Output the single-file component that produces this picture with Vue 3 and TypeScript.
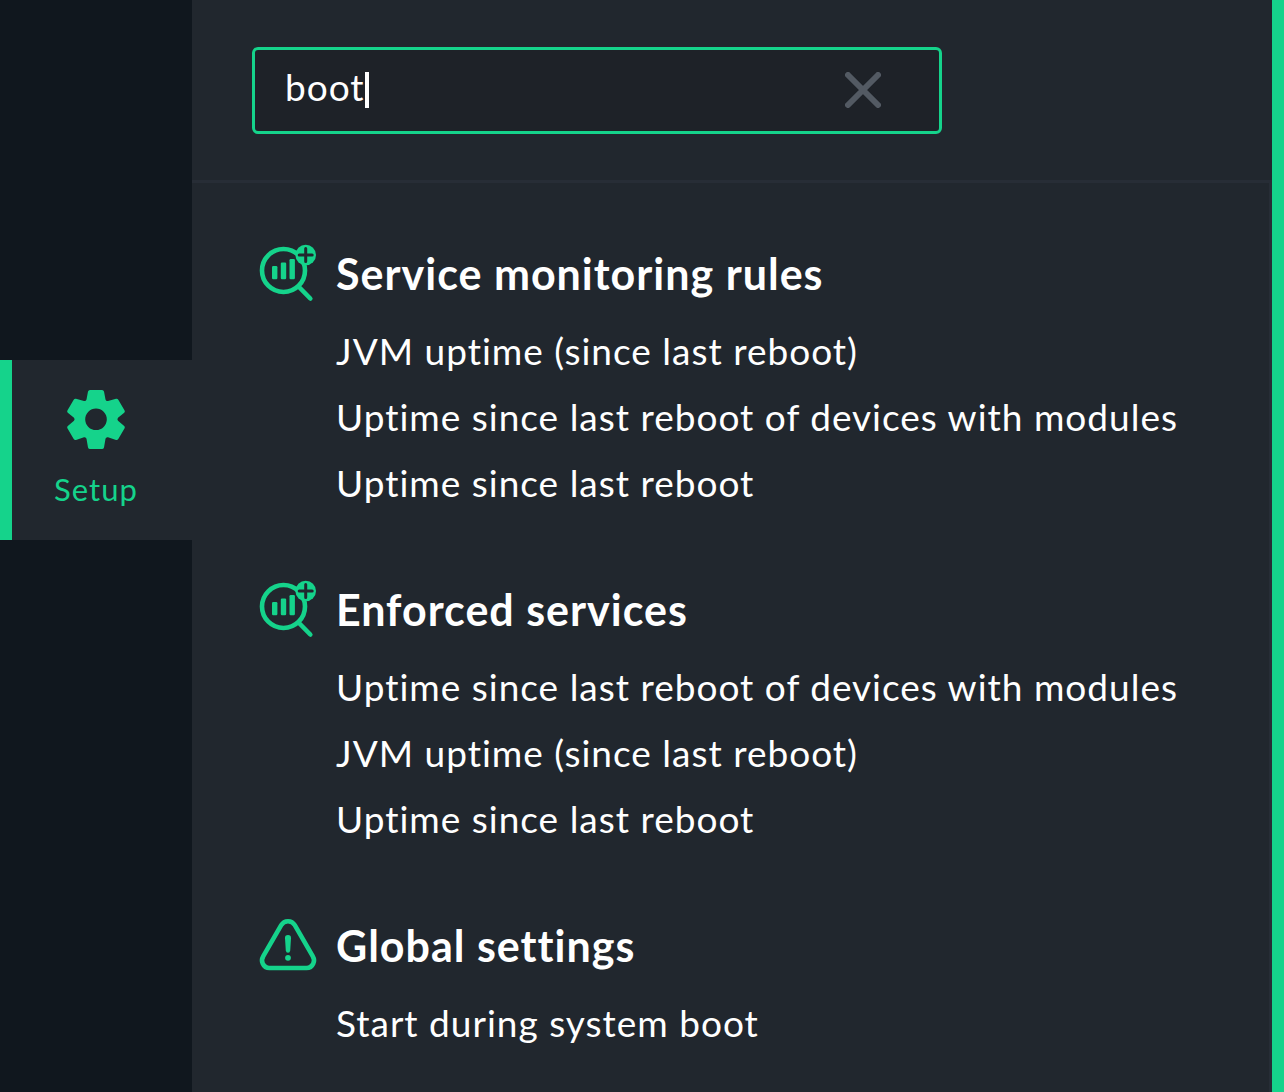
<script setup lang="ts">
import { ref } from 'vue'

interface Topic {
  title: string
  icon: 'services' | 'alert'
  items: string[]
}

const query = ref('boot')

const topics: Topic[] = [
  {
    title: 'Service monitoring rules',
    icon: 'services',
    items: [
      'JVM uptime (since last reboot)',
      'Uptime since last reboot of devices with modules',
      'Uptime since last reboot',
    ],
  },
  {
    title: 'Enforced services',
    icon: 'services',
    items: [
      'Uptime since last reboot of devices with modules',
      'JVM uptime (since last reboot)',
      'Uptime since last reboot',
    ],
  },
  {
    title: 'Global settings',
    icon: 'alert',
    items: ['Start during system boot'],
  },
]
</script>

<template>
  <div class="app">
    <nav class="sidebar">
      <button class="setup" type="button">
        <svg class="gear" viewBox="0 0 60 60" aria-hidden="true">
          <path
            fill-rule="evenodd"
            d="M24 0H36Q37.500 0 38 1.500L39.500 9.500Q40 11.300 42 11L50 8.800Q51.500 8.500 52.300 9.700L58.600 20.500Q59.300 21.800 58.200 22.800L52 27.800Q50.800 29.300 52 30.800L58.200 36Q59.300 37 58.600 38.300L52.300 49Q51.500 50.300 50 50L42 47.300Q40 46.900 39.500 48.800L38 57.500Q37.500 59 36 59H24Q22.500 59 22 57.500L20.500 48.800Q20 46.900 18 47.300L10 50Q8.500 50.300 7.700 49L1.400 38.300Q0.700 37 1.800 36L8 30.800Q9.200 29.300 8 27.800L1.800 22.800Q0.700 21.800 1.400 20.500L7.700 9.700Q8.500 8.500 10 8.800L18 11Q20 11.300 20.500 9.500L22 1.500Q22.500 0 24 0ZM30 18.500A10.800 10.800 0 1 0 30 40.100A10.800 10.800 0 1 0 30 18.500Z"
          />
        </svg>
        <span>Setup</span>
      </button>
    </nav>

    <main class="panel">
      <form class="search" @submit.prevent>
        <div class="field">
          <input v-model="query" class="query" type="text" aria-label="Search setup" />
          <span class="caret" aria-hidden="true"></span>
          <button class="clear" type="button" aria-label="Clear search" @click="query = ''">
            <svg viewBox="0 0 36 36" aria-hidden="true">
              <path d="M3 3L33 33M33 3L3 33" />
            </svg>
          </button>
        </div>
      </form>

      <div class="results">
        <section v-for="topic in topics" :key="topic.title" class="topic">
          <header class="head">
            <svg v-if="topic.icon === 'services'" class="icon" viewBox="0 0 60 60" aria-hidden="true">
              <circle cx="25.500" cy="27.500" r="21.500" class="line" />
              <path d="M41 44L52.300 55.500" class="line round" />
              <g class="solid">
                <rect x="14" y="23" width="5.400" height="13.300" rx="1.200" />
                <rect x="22.800" y="19.500" width="5.400" height="16.800" rx="1.200" />
                <rect x="31.500" y="16" width="5.400" height="20.300" rx="1.200" />
                <circle cx="47.700" cy="12" r="10.300" />
              </g>
              <path d="M47.700 5.500V18.500M41.200 12H54.200" class="plus" />
            </svg>
            <svg v-else class="icon" viewBox="0 2 60 60" aria-hidden="true">
              <path
                d="M23.200 12.200Q25.500 8.200 30 8.200Q34.500 8.200 36.800 12.200L54.700 43.200Q57 47.200 55.300 50.500Q53.300 55 48.500 55H11.500Q6.700 55 4.700 50.500Q3 47.200 5.300 43.200Z"
                class="line"
              />
              <path
                d="M30 22Q33.200 22 33 25.200L32.200 37.500Q32 39.800 30 39.800Q28 39.800 27.800 37.500L27 25.200Q26.800 22 30 22Z"
                class="solid"
              />
              <circle cx="30" cy="44.800" r="2.900" class="solid" />
            </svg>
            <h2>{{ topic.title }}</h2>
          </header>
          <ul>
            <li v-for="item in topic.items" :key="item">
              <a href="#">{{ item }}</a>
            </li>
          </ul>
        </section>
      </div>
    </main>
  </div>
</template>

<style>
body {
  margin: 0;
  background: #21272e;
}
</style>

<style scoped>
.app {
  display: flex;
  min-height: 100vh;
  box-sizing: border-box;
  border-right: 12px solid #15d38b;
  background: #21272e;
  color: #fff;
  font-family: Lato, 'Open Sans', sans-serif;
  font-size: 37px;
  letter-spacing: 1px;
}

.sidebar {
  flex: 0 0 192px;
  padding-top: 360px;
  background: #10171e;
}

.setup {
  display: flex;
  flex-direction: column;
  align-items: center;
  gap: 21px;
  width: 100%;
  height: 180px;
  padding: 30px 12px 0 0;
  box-sizing: border-box;
  border: 0;
  border-left: 12px solid #15d38b;
  background: #21272e;
  color: #15d38b;
  font: inherit;
  font-size: 31px;
  line-height: 36px;
  letter-spacing: inherit;
}

.gear {
  width: 60px;
  height: 60px;
  fill: #15d38b;
}

.panel {
  display: flex;
  flex: 1;
  flex-direction: column;
  min-width: 0;
}

.search {
  padding: 47px 60px 46px;
  border-bottom: 3px solid #272d36;
}

.field {
  display: flex;
  align-items: center;
  max-width: 690px;
  height: 87px;
  padding: 0 58px 2px 30px;
  box-sizing: border-box;
  border: 3px solid #15d38b;
  border-radius: 6px;
  background: #1e2228;
}

.query {
  field-sizing: content;
  min-width: 0;
  height: 50px;
  margin: 0;
  padding: 0 0 6px;
  box-sizing: border-box;
  border: 0;
  outline: 0;
  background: transparent;
  color: #fff;
  font: inherit;
  letter-spacing: inherit;
  caret-color: transparent;
}

.caret {
  width: 4px;
  height: 36px;
  background: #fff;
}

.clear {
  width: 36px;
  height: 36px;
  margin-left: auto;
  padding: 0;
  border: 0;
  background: transparent;
}

.clear svg {
  display: block;
  fill: none;
  stroke: #535a63;
  stroke-width: 6;
  stroke-linecap: round;
}

.results {
  flex: 1;
  padding: 60px 60px 42px 66px;
  border-right: 3px solid #272d36;
}

.topic + .topic {
  margin-top: 63px;
}

.head {
  display: flex;
  gap: 18px;
  height: 75px;
}

.icon {
  flex: none;
  width: 60px;
  height: 60px;
}

.line {
  fill: none;
  stroke: #15d38b;
  stroke-width: 4.6;
}

.round {
  stroke-linecap: round;
}

.solid {
  fill: #15d38b;
}

.plus {
  fill: none;
  stroke: #21272e;
  stroke-width: 3;
  stroke-linecap: round;
}

h2 {
  margin: 0;
  font-size: 43px;
  line-height: 62px;
  font-weight: 700;
}

ul {
  margin: 0;
  padding: 0 0 0 78px;
  list-style: none;
}

li {
  line-height: 66px;
}

a {
  color: inherit;
  text-decoration: none;
}
</style>
